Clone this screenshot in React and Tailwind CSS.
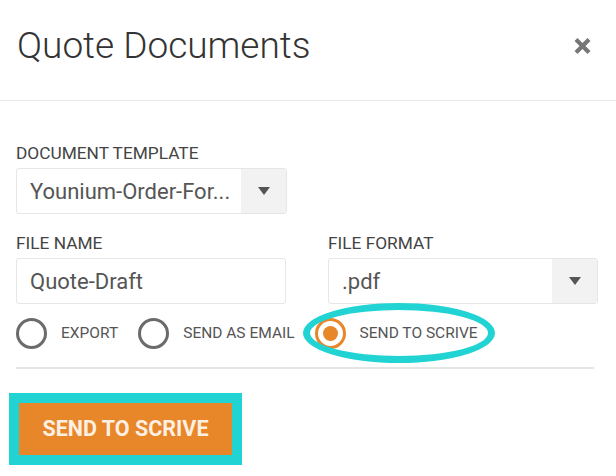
import { useState } from 'react'

function Caret() {
  return (
    <svg width="14" height="10" viewBox="0 0 14 10">
      <path d="M1 1 L13 1 L7 9 Z" fill="#555" />
    </svg>
  )
}

function CloseIcon() {
  return (
    <svg width="19" height="18" viewBox="0 0 19 18">
      <path d="M3 2.5 L16 15.5 M16 2.5 L3 15.5" stroke="#777" strokeWidth="4.2" />
    </svg>
  )
}

function SelectBox({ value, className }) {
  return (
    <div className={`flex h-[46px] items-stretch rounded-[3px] border border-[#e6e6e6] bg-white ${className}`}>
      <div className="flex flex-1 items-center overflow-hidden pl-[13px] text-[22px] whitespace-nowrap text-[#555]">{value}</div>
      <div className="flex w-[45px] items-center justify-center bg-[#f2f2f2]">
        <Caret />
      </div>
    </div>
  )
}

function Radio({ label, checked, onClick }) {
  return (
    <button onClick={onClick} className="flex items-center gap-[14px]">
      <span
        className={`flex h-[31px] w-[31px] items-center justify-center rounded-full border-[3px] ${checked ? 'border-[#e8862a]' : 'border-[#6b6b6b]'}`}
      >
        {checked && <span className="h-[15px] w-[15px] rounded-full bg-[#e8862a]" />}
      </span>
      <span className="text-[15.5px] text-[#555]">{label}</span>
    </button>
  )
}

export default function App() {
  const [mode, setMode] = useState('scrive')

  return (
    <div className="h-[476px] w-[616px] bg-white font-['Roboto',sans-serif]">
      {/* Header */}
      <div className="flex h-[101px] items-center justify-between border-b border-[#e8e8e8] pr-[24px] pb-[8px] pl-[17px]">
        <h2 className="text-[37px] font-light text-[#333]">Quote Documents</h2>
        <button className="leading-none">
          <CloseIcon />
        </button>
      </div>

      {/* Body */}
      <div className="px-4 pt-[42px]">
        <div className="text-[17.3px] leading-[20px] text-[#444]">DOCUMENT TEMPLATE</div>
        <SelectBox value="Younium-Order-For..." className="mt-[5px] w-[271px]" />

        <div className="mt-[19px] flex gap-[42px]">
          <div className="w-[270px]">
            <div className="text-[17.3px] leading-[20px] text-[#444]">FILE NAME</div>
            <div className="mt-[5px] flex h-[46px] items-center rounded-[3px] border border-[#e6e6e6] pl-[13px] text-[22px] text-[#555]">
              Quote-Draft
            </div>
          </div>
          <div className="w-[270px]">
            <div className="text-[17.3px] leading-[20px] text-[#444]">FILE FORMAT</div>
            <SelectBox value=".pdf" className="mt-[5px]" />
          </div>
        </div>

        <div className="mt-[14px] flex items-center gap-[20px]">
          <Radio label="EXPORT" checked={mode === 'export'} onClick={() => setMode('export')} />
          <Radio label="SEND AS EMAIL" checked={mode === 'email'} onClick={() => setMode('email')} />
          <div className="relative">
            <Radio label="SEND TO SCRIVE" checked={mode === 'scrive'} onClick={() => setMode('scrive')} />
            <div className="pointer-events-none absolute top-[-15px] left-[-12px] h-[60px] w-[192px] rounded-[50%] border-[7px] border-[#22d3d3]" />
          </div>
        </div>

        <div className="mt-[18px] w-[578px] border-t-2 border-[#e5e5e5]" />

        <div className="mt-[24px] -ml-[7px] inline-block bg-[#22d3d3] p-[10px]">
          <button className="flex h-[52px] w-[213px] items-center justify-center bg-[#e8862a] text-[21.5px] font-bold text-[#fdf0e2]">
            SEND TO SCRIVE
          </button>
        </div>
      </div>
    </div>
  )
}
